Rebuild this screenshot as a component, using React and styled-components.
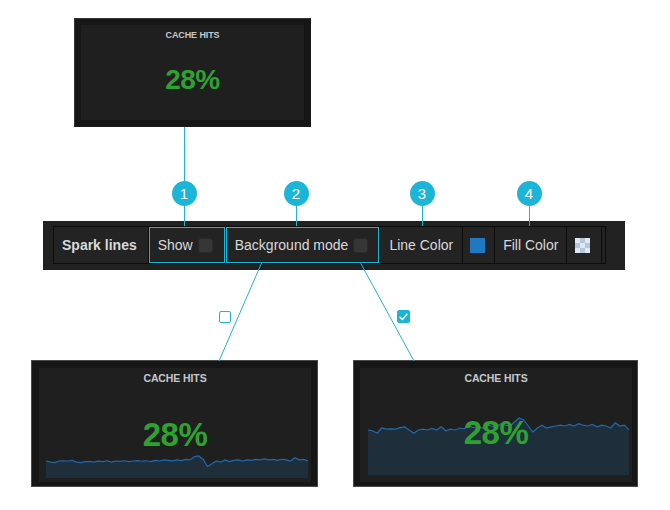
import React from 'react';
import styled, { createGlobalStyle, css } from 'styled-components';

const Global = createGlobalStyle`
  html, body { margin: 0; padding: 0; background: #ffffff; }
  body { font-family: "Liberation Sans", Arial, Helvetica, sans-serif; }
`;

const CYAN = '#1cb5d8';

const Canvas = styled.div`
  position: relative;
  width: 670px;
  height: 510px;
  overflow: hidden;
  background: #ffffff;
`;

/* ---------- panels (diagram nodes) ---------- */
const Panel = styled.div`
  position: absolute;
  left: ${p => p.$x}px;
  top: ${p => p.$y}px;
  width: ${p => p.$w}px;
  height: ${p => p.$h}px;
  box-sizing: border-box;
  display: flex;
  padding: ${p => p.$pad};
  background: #161616;
  border: 1px solid ${p => (p.$framed ? '#4a4a4a' : '#353535')};
  ${p => !p.$framed && css`
    border-right-color: #1a1a1a;
    border-bottom-color: #1a1a1a;
  `}
`;

const PanelBody = styled.div`
  position: relative;
  flex: 1;
  display: flex;
  flex-direction: column;
  align-items: center;
  overflow: hidden;
  background: #1f1f1f;
`;

const Title = styled.div`
  position: relative;
  z-index: 1;
  margin-top: 4px;
  font-size: ${p => p.$size}px;
  line-height: ${p => p.$lh}px;
  font-weight: bold;
  color: #c3c8ce;
  letter-spacing: -0.1px;
`;

const Value = styled.div`
  position: relative;
  z-index: 1;
  margin-top: ${p => p.$gap}px;
  font-size: ${p => p.$size}px;
  line-height: 1;
  font-weight: bold;
  color: #2ea131;
  letter-spacing: -0.5px;
`;

const Spark = styled.svg`
  position: absolute;
  left: ${p => p.$l}px;
  right: ${p => p.$r}px;
  bottom: ${p => p.$b}px;
  height: ${p => p.$h}px;
  display: block;
`;

/* ---------- toolbar ---------- */
const Toolbar = styled.div`
  position: absolute;
  left: 43px;
  top: 221px;
  width: 582px;
  height: 49px;
  box-sizing: border-box;
  padding: 5px 10px 6px 10px;
  background: #212121;
  display: flex;
`;

const FormRow = styled.div`
  display: flex;
  align-items: stretch;
  border: 1px solid #0c0c0c;
  padding-right: 3px;
  background: #222222;
`;

const Segment = styled.div`
  display: flex;
  align-items: center;
  gap: 5px;
  padding: ${p => p.$pad || '0 10px'};
  border-right: 1px solid #0c0c0c;
  background: #232323;
  color: #d8d9da;
  font-size: 14px;
  font-weight: ${p => (p.$bold ? 'bold' : 'normal')};
  white-space: nowrap;
  ${p => p.$hl && css`
    box-shadow: inset 0 0 0 1px ${CYAN};
  `}
`;

const DarkCheck = styled.span`
  width: 15px;
  height: 15px;
  box-sizing: border-box;
  border-radius: 3px;
  background: #363636;
  border: 1px solid #2a2a2a;
`;

const Swatch = styled.span`
  width: 15px;
  height: 15px;
  ${p => p.$checker
    ? css`background: repeating-conic-gradient(#b4c7d8 0 25%, #dce8f3 0 50%) 0 0 / 10px 10px;`
    : css`background: #1f78c1;`}
`;

/* ---------- annotations ---------- */
const Badge = styled.div`
  position: absolute;
  left: ${p => p.$cx - 12.5}px;
  top: ${p => p.$cy - 12.5}px;
  width: 25px;
  height: 25px;
  border-radius: 50%;
  background: ${CYAN};
  color: #ffffff;
  font-family: "Liberation Sans", Arial, sans-serif;
  font-size: 15px;
  display: flex;
  align-items: center;
  justify-content: center;
`;

const Tick = styled.div`
  position: absolute;
  left: ${p => p.$x}px;
  top: ${p => p.$y}px;
  width: ${p => p.$s}px;
  height: ${p => p.$s}px;
  box-sizing: border-box;
  border-radius: 2px;
  border: 1.5px solid ${CYAN};
  background: ${p => (p.$on ? CYAN : '#ffffff')};
  display: flex;
  align-items: center;
  justify-content: center;
`;

const Wires = styled.svg`
  position: absolute;
  left: 0;
  top: 0;
  width: 670px;
  height: 510px;
  pointer-events: none;
`;

/* ---------- data ---------- */
const leftData = [0.55,0.5,0.48,0.55,0.56,0.55,0.58,0.5,0.48,0.52,0.53,0.5,0.54,0.52,0.56,0.5,0.55,0.53,0.56,0.52,0.55,0.57,0.54,0.56,0.52,0.58,0.55,0.6,0.58,0.56,0.6,0.57,0.62,0.6,0.75,0.78,0.62,0.3,0.42,0.55,0.5,0.6,0.52,0.58,0.6,0.55,0.6,0.58,0.62,0.6,0.65,0.6,0.62,0.58,0.63,0.6,0.55,0.7,0.6,0.62,0.55];
const rightData = [0.5,0.48,0.42,0.55,0.52,0.53,0.52,0.56,0.58,0.5,0.42,0.5,0.52,0.5,0.54,0.5,0.58,0.48,0.52,0.5,0.55,0.53,0.6,0.56,0.58,0.55,0.62,0.6,0.58,0.65,0.62,0.6,0.7,0.8,0.75,0.6,0.45,0.55,0.62,0.55,0.58,0.6,0.62,0.6,0.64,0.6,0.66,0.62,0.6,0.64,0.58,0.62,0.6,0.55,0.68,0.6,0.62,0.5];

function sparkPaths(data, w, h, base, k) {
  const pts = data.map((v, i) => {
    const x = (i / (data.length - 1)) * w;
    const y = Math.max(0.5, Math.min(h, base - (v - 0.55) * k));
    return [x.toFixed(2), y.toFixed(2)];
  });
  const line = 'M' + pts.map(p => p.join(',')).join(' L');
  const area = line + ` L${w},${h} L0,${h} Z`;
  return { line, area };
}

function Sparkline({ data, w, h, base, k, ...rest }) {
  const { line, area } = sparkPaths(data, w, h, base, k);
  return (
    <Spark viewBox={`0 0 ${w} ${h}`} preserveAspectRatio="none" $h={h} {...rest}>
      <path d={area} fill="rgba(31,118,189,0.18)" />
      <path d={line} fill="none" stroke="#1f69ad" strokeWidth="1.2" />
    </Spark>
  );
}

function StatPanel({ x, y, w, h, pad, framed, titleSize, titleLh, valueSize, gap, spark }) {
  return (
    <Panel $x={x} $y={y} $w={w} $h={h} $pad={pad} $framed={framed}>
      <PanelBody>
        {spark}
        <Title $size={titleSize} $lh={titleLh}>CACHE HITS</Title>
        <Value $size={valueSize} $gap={gap}>28%</Value>
      </PanelBody>
    </Panel>
  );
}

export default function App() {
  return (
    <Canvas>
      <Global />

      <StatPanel x={74} y={18} w={237} h={109} pad="6px 6px 6px 6px"
        titleSize={9} titleLh={12} valueSize={28} gap={25} />

      <Toolbar>
        <FormRow>
          <Segment $bold $pad="0 11px 0 8px">Spark lines</Segment>
          <Segment $hl $pad="0 12px 0 9px">Show<DarkCheck /></Segment>
          <Segment $hl $pad="0 11px 0 9px">Background mode<DarkCheck /></Segment>
          <Segment $pad="0 9px">Line Color</Segment>
          <Segment $pad="0 9px 0 7px"><Swatch /></Segment>
          <Segment $pad="0 8px">Fill Color</Segment>
          <Segment $pad="0 11px 0 8px"><Swatch $checker /></Segment>
        </FormRow>
      </Toolbar>

      <Badge $cx={184} $cy={193}>1</Badge>
      <Badge $cx={296} $cy={193}>2</Badge>
      <Badge $cx={422} $cy={193}>3</Badge>
      <Badge $cx={529} $cy={193}>4</Badge>

      <Tick $x={219} $y={311} $s={12} />
      <Tick $x={397} $y={310} $s={13} $on>
        <svg width="9" height="8" viewBox="0 0 9 8">
          <path d="M1 4.2 L3.4 6.5 L8 1.2" fill="none" stroke="#ffffff" strokeWidth="1.4" strokeLinecap="round" strokeLinejoin="round" />
        </svg>
      </Tick>

      <StatPanel x={31} y={360} w={287} h={127} pad="7px 6px 4px 7px" framed
        titleSize={10.5} titleLh={13} valueSize={33} gap={33}
        spark={<Sparkline data={leftData} w={262} h={24} base={7} k={22} $l={7} $r={4} $b={4} />} />

      <StatPanel x={353} y={360} w={285} h={127} pad="7px 5px 4px 6px" framed
        titleSize={10.5} titleLh={13} valueSize={33} gap={31}
        spark={<Sparkline data={rightData} w={261} h={60} base={13} k={40} $l={8} $r={5} $b={7} />} />

      <Wires viewBox="0 0 670 510">
        <g stroke={CYAN} strokeWidth="1" fill="none">
          <line x1="184.5" y1="127" x2="184.5" y2="181" />
          <line x1="184.5" y1="205" x2="184.5" y2="226" />
          <line x1="296.5" y1="205" x2="296.5" y2="226" />
          <line x1="422.5" y1="205" x2="422.5" y2="226" />
          <line x1="529.5" y1="205" x2="529.5" y2="226" />
          <line x1="262" y1="262" x2="219" y2="361" />
          <line x1="360" y1="262" x2="414" y2="361" />
        </g>
      </Wires>
    </Canvas>
  );
}
